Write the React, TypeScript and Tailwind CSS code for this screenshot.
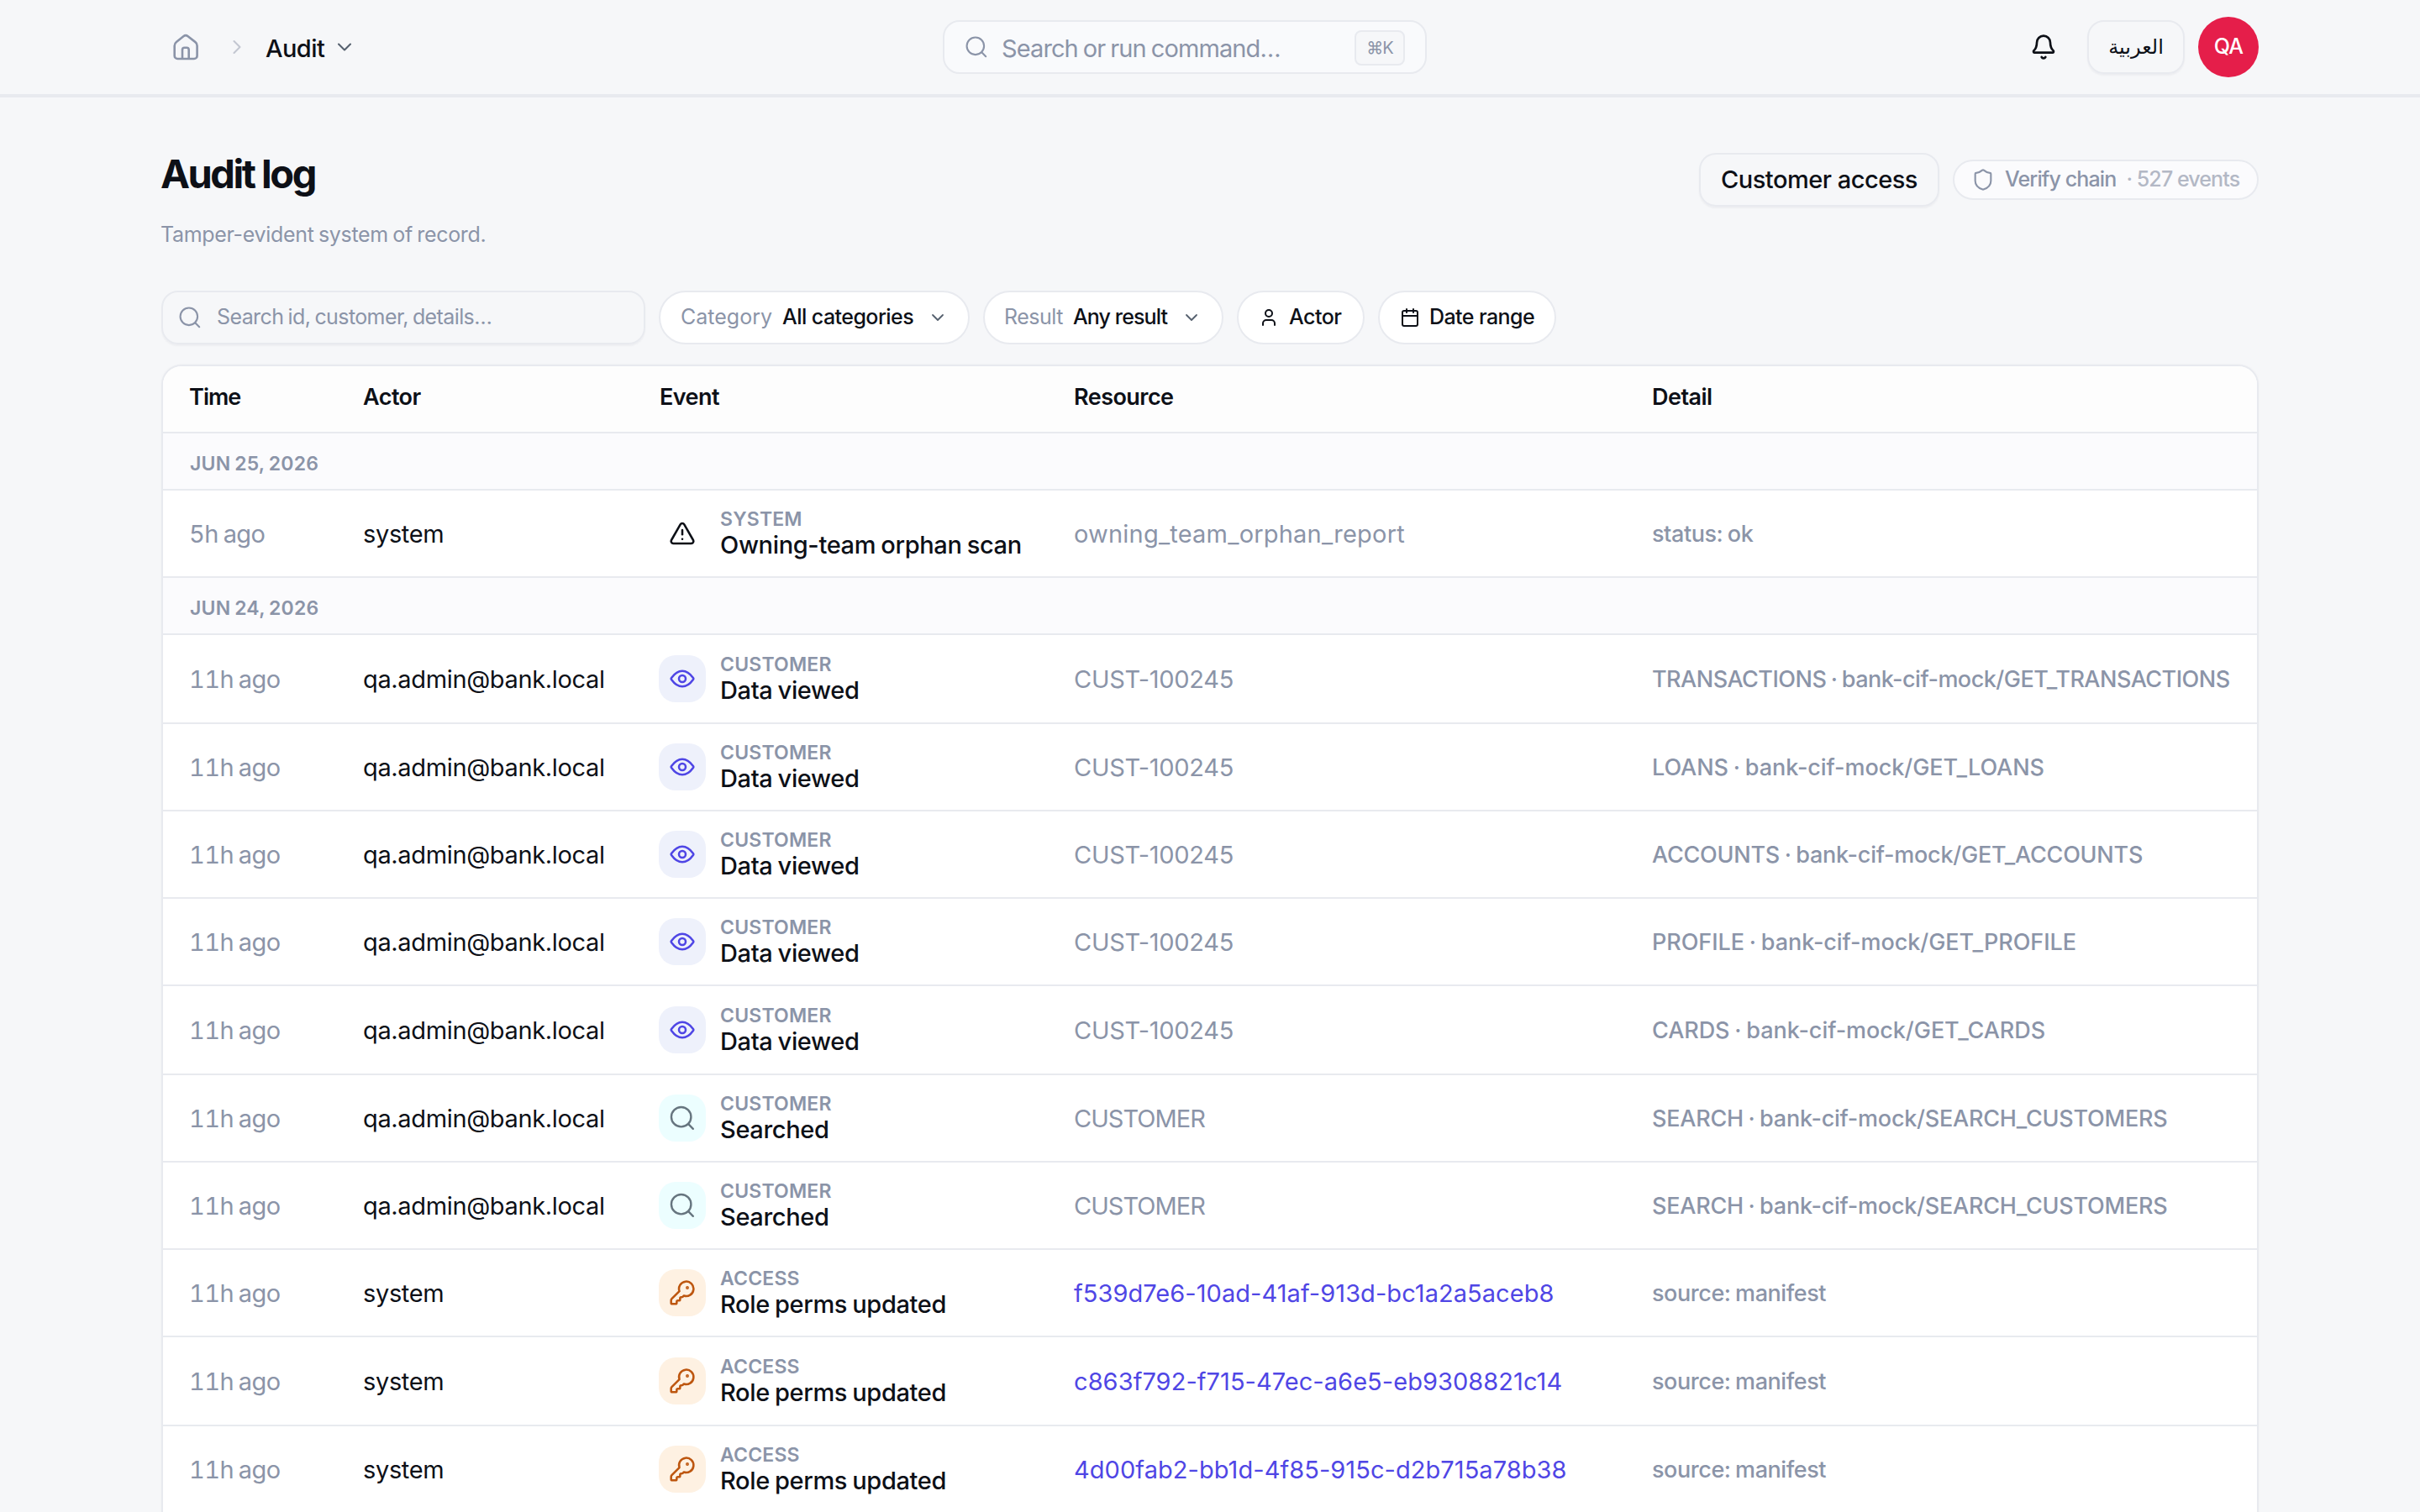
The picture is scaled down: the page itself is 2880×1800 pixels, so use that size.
import { Bell, Calendar, ChevronDown, ChevronRight, KeyRound, Shield, TriangleAlert, User } from "lucide-react";
import clsx from "clsx";

type Kind = "system" | "view" | "search" | "access";

interface AuditEvent {
  time: string;
  actor: string;
  kind: Kind;
  category: string;
  title: string;
  resource: string;
  detail: string;
  detailTracking?: string;
}

interface EventGroup {
  date: string;
  events: AuditEvent[];
}

const viewed = (scope: string, detailTracking = "tracking-[-0.002em]"): AuditEvent => ({
  time: "11h ago",
  actor: "qa.admin@bank.local",
  kind: "view",
  category: "CUSTOMER",
  title: "Data viewed",
  resource: "CUST-100245",
  detail: `${scope} · bank-cif-mock/GET_${scope}`,
  detailTracking,
});

const searched = (): AuditEvent => ({
  time: "11h ago",
  actor: "qa.admin@bank.local",
  kind: "search",
  category: "CUSTOMER",
  title: "Searched",
  resource: "CUSTOMER",
  detail: "SEARCH · bank-cif-mock/SEARCH_CUSTOMERS",
  detailTracking: "tracking-[-0.009em]",
});

const roleUpdated = (id: string): AuditEvent => ({
  time: "11h ago",
  actor: "system",
  kind: "access",
  category: "ACCESS",
  title: "Role perms updated",
  resource: id,
  detail: "source: manifest",
});

const groups: EventGroup[] = [
  {
    date: "JUN 25, 2026",
    events: [
      {
        time: "5h ago",
        actor: "system",
        kind: "system",
        category: "SYSTEM",
        title: "Owning-team orphan scan",
        resource: "owning_team_orphan_report",
        detail: "status: ok",
      },
    ],
  },
  {
    date: "JUN 24, 2026",
    events: [
      viewed("TRANSACTIONS", "tracking-[-0.019em]"),
      viewed("LOANS"),
      viewed("ACCOUNTS", "tracking-[-0.009em]"),
      viewed("PROFILE"),
      viewed("CARDS"),
      searched(),
      searched(),
      roleUpdated("f539d7e6-10ad-41af-913d-bc1a2a5aceb8"),
      roleUpdated("c863f792-f715-47ec-a6e5-eb9308821c14"),
      roleUpdated("4d00fab2-bb1d-4f85-915c-d2b715a78b38"),
    ],
  },
];

const resourceStyle: Record<Kind, string> = {
  system: "text-[#8b94a8] tracking-[0.007em]",
  view: "text-[#8b94a8] tracking-[-0.01em]",
  search: "text-[#8b94a8] tracking-[-0.034em]",
  access: "text-[#4f46e5] tracking-[0.002em]",
};

const tileStyle: Record<Kind, string> = {
  system: "text-[#0d1017]",
  view: "bg-[#eef1fb] text-[#4f46e5]",
  search: "bg-cyan-50 text-[#66757f]",
  access: "bg-[#fef1e2] text-[#bd560f]",
};

const COLS = "grid grid-cols-[206px_353px_494px_687px_1fr] items-center pl-8";

function HomeIcon() {
  return (
    <svg width="36" height="36" viewBox="0 0 36 36" fill="none" stroke="currentColor" strokeWidth="2.6" strokeLinejoin="round">
      <path d="M4.7 16.4c0-1.8.8-3.4 2.2-4.5l8.4-6.6a4.3 4.3 0 0 1 5.4 0l8.5 6.6c1.5 1.1 2.4 2.7 2.4 4.5v12a3.6 3.6 0 0 1-3.6 3.6H8.3a3.6 3.6 0 0 1-3.6-3.6Z" />
      <path d="M14 32V21.3a2.5 2.5 0 0 1 2.5-2.5h2.7a2.5 2.5 0 0 1 2.5 2.5V32" />
    </svg>
  );
}

function SearchIcon({ size }: { size: number }) {
  return (
    <svg width={size} height={size} viewBox="0 0 24 24" fill="none" stroke="currentColor" strokeWidth="1.8" strokeLinecap="round">
      <circle cx="11" cy="11" r="8.8" />
      <path d="m17.6 17.6 4 4" />
    </svg>
  );
}

function EyeIcon() {
  return (
    <svg width="32" height="32" viewBox="0 0 24 24" fill="none" stroke="currentColor" strokeWidth="1.9" strokeLinejoin="round">
      <path d="M21.544 11.045c.304.426.456.64.456.955s-.152.529-.456.955C20.178 14.871 16.689 19 12 19s-8.178-4.13-9.544-6.045C2.152 12.529 2 12.315 2 12s.152-.529.456-.955C3.822 9.129 7.311 5 12 5s8.178 4.13 9.544 6.045Z" />
      <circle cx="12" cy="12" r="3" />
    </svg>
  );
}

function EventTile({ kind }: { kind: Kind }) {
  return (
    <span className={clsx("flex size-14 shrink-0 items-center justify-center rounded-[20px]", tileStyle[kind])}>
      {kind === "system" && <TriangleAlert size={32} strokeWidth={1.9} />}
      {kind === "view" && <EyeIcon />}
      {kind === "search" && <SearchIcon size={32} />}
      {kind === "access" && <KeyRound size={32} strokeWidth={1.9} />}
    </span>
  );
}

function TopBar() {
  return (
    <header className="flex h-[116px] items-center border-b-4 border-[#e8eaef] pr-48 pl-[203px]">
      <nav className="flex w-[919px] items-center text-[#8b94a8]">
        <HomeIcon />
        <ChevronRight size={28} strokeWidth={1.8} className="ml-[29px] text-[#c3c7d1]" />
        <span className="mt-[3px] ml-5 w-[80px] text-[29px] font-medium tracking-[-0.02em] text-[#0d1017]">Audit</span>
        <ChevronDown size={28} strokeWidth={1.8} className="text-[#55606e]" />
      </nav>

      <div className="flex h-16 w-[576px] items-center rounded-[20px] border-2 border-[#e8eaef] bg-[#f9fafc] pr-6 pl-6 text-[#8b94a8]">
        <SearchIcon size={28} />
        <span className="mt-[3px] ml-4 text-[29px] tracking-[-0.031em]">Search or run command…</span>
        <kbd className="mt-0.5 ml-auto flex h-[42px] w-[60px] items-center justify-center rounded-lg border-2 border-[#e8eaef] bg-[#f6f7f9] font-['Inter','DejaVu_Sans',sans-serif] text-[20px] tracking-[-0.05em]">
          ⌘K
        </kbd>
      </div>

      <div className="ml-auto flex items-center gap-4">
        <button className="flex size-[72px] items-center justify-center text-[#0d1017]">
          <Bell size={32} strokeWidth={2} />
        </button>
        <button
          lang="ar"
          className="flex h-16 w-[116px] items-center justify-center rounded-[20px] border-2 border-[#e8eaef] font-['DejaVu_Sans',sans-serif] text-[24px] text-[#0d1017] shadow-[0_2px_2px_rgba(16,24,40,0.04)]"
        >
          العربية
        </button>
        <span className="flex size-[72px] items-center justify-center rounded-full bg-[#e51e4a] text-[25px] font-medium tracking-[-0.03em] text-white">
          QA
        </span>
      </div>
    </header>
  );
}

function PageHeading() {
  return (
    <div className="flex items-start justify-between">
      <div>
        <h1 className="-ml-px text-[47px] leading-[54px] font-bold tracking-[-0.053em] text-[#0d1017] [word-spacing:0]">Audit log</h1>
        <p className="mt-[27px] -ml-px text-[25px] leading-9 tracking-[-0.013em] text-[#8b94a8]">Tamper-evident system of record.</p>
      </div>
      <div className="mt-0.5 flex items-center gap-4">
        <button className="flex h-16 w-[286px] items-center justify-center rounded-[20px] border-2 border-[#e8eaef] text-[29px] font-medium tracking-[-0.017em] text-[#0d1017] shadow-[0_2px_2px_rgba(16,24,40,0.04)]">
          Customer access
        </button>
        <button className="flex h-12 w-[364px] items-center rounded-full border-2 border-[#e8eaef] bg-[#fbfbfd] pl-5 text-[25px] font-medium text-[#8b94a8]">
          <Shield size={28} strokeWidth={1.8} />
          <span className="ml-3 tracking-[-0.035em]">Verify chain</span>
          <span className="ml-3 tracking-[-0.036em] text-[#b3b8c5]">· 527 events</span>
        </button>
      </div>
    </div>
  );
}

const PILL =
  "flex h-16 items-center rounded-full border-2 border-[#e8eaef] bg-white px-6 text-[25px] font-medium whitespace-nowrap text-[#0d1017]";

function Filters() {
  return (
    <div className="mt-[49px] flex gap-4">
      <div className="flex h-16 w-[576px] items-center rounded-[20px] border-2 border-[#e8eaef] pl-[18px] text-[#8b94a8] shadow-[0_2px_2px_rgba(16,24,40,0.04)]">
        <SearchIcon size={28} />
        <span className="ml-[18px] text-[25px] tracking-[-0.024em]">Search id, customer, details…</span>
      </div>
      <button className={clsx(PILL, "w-[370px]")}>
        <span className="font-normal text-[#8b94a8]">Category</span>
        <span className="ml-3 tracking-[-0.022em]">All categories</span>
        <ChevronDown size={24} strokeWidth={1.8} className="ml-auto text-[#55606e]" />
      </button>
      <button className={clsx(PILL, "w-[286px]")}>
        <span className="-ml-px font-normal tracking-[-0.02em] text-[#8b94a8]">Result</span>
        <span className="ml-3 tracking-[-0.035em]">Any result</span>
        <ChevronDown size={24} strokeWidth={1.8} className="ml-auto text-[#55606e]" />
      </button>
      <button className={clsx(PILL, "w-[152px]")}>
        <User size={24} strokeWidth={2} />
        <span className="ml-3 tracking-[-0.02em]">Actor</span>
      </button>
      <button className={clsx(PILL, "w-[212px]")}>
        <Calendar size={24} strokeWidth={2} className="shrink-0" />
        <span className="ml-[11px] tracking-[-0.023em]">Date range</span>
      </button>
    </div>
  );
}

function EventRow({ event, tall }: { event: AuditEvent; tall: boolean }) {
  return (
    <div className={clsx(COLS, "border-b-2 border-[#e8eaef] text-[29px] whitespace-nowrap", tall ? "h-[106px]" : "h-[104px]")}>
      <span className="-ml-px pt-px tracking-[-0.021em] text-[#8b94a8] tabular-nums">{event.time}</span>
      <span className="pt-px tracking-[-0.012em] text-[#0d1017]">{event.actor}</span>
      <div className="-ml-px flex items-center gap-[17px]">
        <EventTile kind={event.kind} />
        <div>
          <div className="text-[23px] leading-7 font-semibold tracking-[0.008em] text-[#8b94a8]">{event.category}</div>
          <div className="leading-[34px] font-medium tracking-[-0.012em] text-[#0d1017]">{event.title}</div>
        </div>
      </div>
      <span className={clsx("-ml-px pt-px", resourceStyle[event.kind])}>{event.resource}</span>
      <span className={clsx("pt-[3px] text-[27px] font-medium text-[#8b94a8]", event.detailTracking ?? "tracking-[-0.016em]")}>
        {event.detail}
      </span>
    </div>
  );
}

function AuditTable() {
  return (
    <section className="mt-6 overflow-hidden rounded-t-[24px] border-2 border-b-0 border-[#e8eaef] bg-white shadow-[0_0_3px_rgba(16,24,40,0.04)]">
      <div className={clsx(COLS, "h-20 border-b-2 border-[#e8eaef] bg-[#fdfdfd] pb-1 text-[27px] font-semibold tracking-[-0.02em] text-[#0d1017]")}>
        <span className="-ml-px tracking-[-0.035em]">Time</span>
        <span>Actor</span>
        <span>Event</span>
        <span className="-ml-px">Resource</span>
        <span>Detail</span>
      </div>
      {groups.map((group) => (
        <div key={group.date}>
          <div className="flex h-[68px] items-center border-b-2 border-[#e8eaef] bg-[#fbfbfd] pt-1.5 pl-8 text-[23px] font-semibold tracking-[0.01em] text-[#8b94a8]">
            {group.date}
          </div>
          {/* row height is 104.5 on average, so every fourth row takes the extra pixels */}
          {group.events.map((event, i) => (
            <EventRow key={i} event={event} tall={event.kind !== "system" && i % 4 === 0} />
          ))}
        </div>
      ))}
    </section>
  );
}

export default function App() {
  return (
    <div className="h-[1800px] w-full overflow-hidden bg-[#f6f7f9] font-['Inter',sans-serif] [word-spacing:-0.08em]">
      <TopBar />
      <main className="px-48 pt-16">
        <PageHeading />
        <Filters />
        <AuditTable />
      </main>
    </div>
  );
}
